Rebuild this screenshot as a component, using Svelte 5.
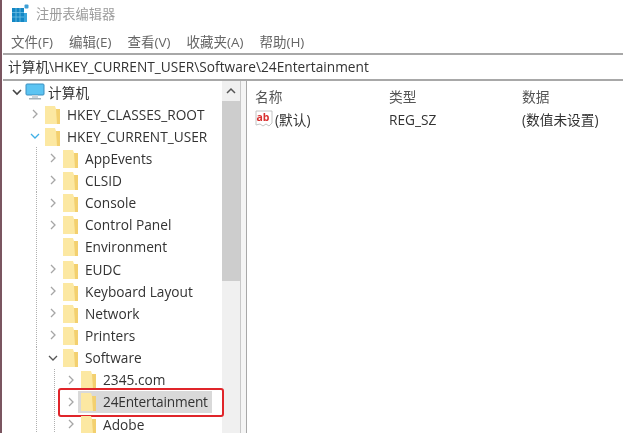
<script>
    const menus = ["文件(F)", "编辑(E)", "查看(V)", "收藏夹(A)", "帮助(H)"];
    const rows = [
        { label: "HKEY_CLASSES_ROOT", depth: 0, arrow: "closed" },
        { label: "HKEY_CURRENT_USER", depth: 0, arrow: "open-blue" },
        { label: "AppEvents", depth: 1, arrow: "closed" },
        { label: "CLSID", depth: 1, arrow: "closed" },
        { label: "Console", depth: 1, arrow: "closed" },
        { label: "Control Panel", depth: 1, arrow: "closed" },
        { label: "Environment", depth: 1, arrow: "none" },
        { label: "EUDC", depth: 1, arrow: "closed" },
        { label: "Keyboard Layout", depth: 1, arrow: "closed" },
        { label: "Network", depth: 1, arrow: "closed" },
        { label: "Printers", depth: 1, arrow: "closed" },
        { label: "Software", depth: 1, arrow: "open" },
        { label: "2345.com", depth: 2, arrow: "closed" },
        { label: "24Entertainment", depth: 2, arrow: "closed", selected: true },
        { label: "Adobe", depth: 2, arrow: "closed" },
    ];
</script>

<div class="window">
    <div class="title">
        <svg class="logo" width="17" height="18" viewBox="0 0 17 18">
            <path d="M0 4h12v14H0z" fill="#1487c4" />
            <path d="M4 4v14M8 4v14M0 8.500h12M0 13h12" stroke="#6fc0e6" stroke-width="0.800" />
            <path d="M12 9h3v9h-3z" fill="#3aa6dc" />
            <rect x="12.500" y="0.500" width="4" height="4" rx="1" fill="#3f9fd6" />
        </svg>
        <span>注册表编辑器</span>
    </div>

    <div class="menu">
        {#each menus as item}
            <span>{item}</span>
        {/each}
    </div>

    <div class="address">计算机\HKEY_CURRENT_USER\Software\24Entertainment</div>

    <div class="main">
        <div class="tree">
            <div class="root">
                <svg class="arrow" width="10" height="10" viewBox="0 0 10 10">
                    <path d="M1 3l4 4 4-4" fill="none" stroke="#444" stroke-width="1.600" />
                </svg>
                <svg width="20" height="18" viewBox="0 0 20 18">
                    <rect x="1" y="1" width="18" height="11" rx="1" fill="#5cc4f2" stroke="#3b8fc0" />
                    <rect x="7" y="12" width="6" height="3" fill="#c9d3da" />
                    <rect x="4" y="15" width="12" height="1.500" fill="#a3b1ba" />
                </svg>
                <span>计算机</span>
            </div>
            {#each rows as row}
                <div class="row depth{row.depth}">
                    <span class="slot">
                        {#if row.arrow === "closed"}
                            <svg width="10" height="12" viewBox="0 0 10 12">
                                <path d="M3 2l4 4-4 4" fill="none" stroke="#a6a6a6" stroke-width="1.300" />
                            </svg>
                        {:else if row.arrow === "open"}
                            <svg width="10" height="12" viewBox="0 0 10 12">
                                <path d="M1 4l4 4 4-4" fill="none" stroke="#555" stroke-width="1.300" />
                            </svg>
                        {:else if row.arrow === "open-blue"}
                            <svg width="10" height="12" viewBox="0 0 10 12">
                                <path d="M1 4l4 4 4-4" fill="none" stroke="#3fb0e6" stroke-width="1.300" />
                            </svg>
                        {/if}
                    </span>
                    <span class="entry" class:selected={row.selected}>
                        <svg class="folder" width="15" height="19" viewBox="0 0 15 19">
                            <path d="M0 1h10l1 3h4v15H0z" fill="#fce8a2" />
                            <path d="M11 4h4v15h-3z" fill="#f3d06f" />
                        </svg>
                        <span class="label">{row.label}</span>
                    </span>
                    {#if row.selected}
                        <span class="mark"></span>
                    {/if}
                </div>
            {/each}
        </div>

        <div class="scrollbar">
            <svg width="10" height="8" viewBox="0 0 10 8">
                <path d="M1 6l4-4 4 4" fill="none" stroke="#555" stroke-width="1.500" />
            </svg>
            <div class="thumb"></div>
        </div>

        <div class="splitter"></div>

        <div class="list">
            <div class="cols head">
                <span>名称</span>
                <span>类型</span>
                <span>数据</span>
            </div>
            <div class="cols">
                <span class="name">
                    <svg width="18" height="18" viewBox="0 0 18 18">
                        <path d="M1 1h16v12l-3 3-3-2-3 2-3-2-4 1z" fill="#fff" stroke="#c4c4c4" />
                        <text x="1.500" y="10.500" class="ab">ab</text>
                    </svg>
                    (默认)
                </span>
                <span>REG_SZ</span>
                <span>(数值未设置)</span>
            </div>
        </div>
    </div>
</div>

<style>
    :global(body) {
        background: #fff;
        overflow: hidden;
    }

    .window {
        width: 623px;
        height: 433px;
        box-sizing: border-box;
        border-left: 2px solid #7a5560;
        padding-left: 1px;
        display: flex;
        flex-direction: column;
        overflow: hidden;
        font-family: "Open Sans", "Noto Sans CJK SC", sans-serif;
        font-size: 13.700px;
        color: #333;
        background: #fff;
        filter: blur(0.4px);
    }

    .title {
        height: 28px;
        box-sizing: border-box;
        padding-bottom: 2px;
        display: flex;
        align-items: center;
        gap: 7px;
        padding-left: 9px;
        color: #9c9c9c;
        font-size: 13.200px;
        flex: none;
    }

    .logo {
        flex: none;
    }

    .menu {
        height: 25px;
        display: flex;
        align-items: center;
        gap: 16px;
        padding-left: 8px;
        color: #666;
        font-size: 13.500px;
        flex: none;
    }

    .address {
        height: 24px;
        line-height: 24px;
        flex: none;
        border-top: 2px solid #a8a8a8;
        border-bottom: 2px solid #a8a8a8;
        padding-left: 5px;
        font-size: 13.700px;
        white-space: nowrap;
    }

    .main {
        flex: 1;
        display: flex;
        min-height: 0;
    }

    .tree {
        width: 219px;
        flex: none;
    }

    .root {
        height: 22px;
        display: flex;
        align-items: center;
        padding-left: 9px;
        gap: 3px;
    }

    .arrow {
        flex: none;
    }

    .row {
        position: relative;
        height: 22.150px;
        display: flex;
        align-items: center;
        background-image:
            linear-gradient(#b0b0b0 50%, transparent 50%),
            linear-gradient(#b0b0b0 50%, transparent 50%);
        background-size: 1px 2px, 1px 2px;
        background-repeat: repeat-y;
        background-position: -9px 0, -9px 0;
    }

    .depth0 {
        padding-left: 27px;
    }

    .depth1 {
        padding-left: 45px;
        background-position: 33px 0, -9px 0;
    }

    .depth2 {
        padding-left: 63px;
        background-position: 33px 0, 51px 0;
    }

    .slot {
        width: 15px;
        flex: none;
        display: flex;
        align-items: center;
    }

    .entry {
        display: flex;
        align-items: center;
        gap: 7px;
        height: 22px;
    }

    .entry.selected {
        background: #d9d9d9;
        padding-right: 4px;
        margin-left: -3px;
        padding-left: 3px;
    }

    .selected .label {
        letter-spacing: -0.2px;
    }

    .folder {
        flex: none;
    }

    .label {
        white-space: nowrap;
    }

    .mark {
        position: absolute;
        left: 55px;
        top: -3px;
        width: 162px;
        height: 25px;
        border: 2.500px solid #e0252a;
        border-radius: 3px;
    }

    .scrollbar {
        width: 18px;
        flex: none;
        background: #f0f0f0;
        display: flex;
        flex-direction: column;
        align-items: center;
        padding-top: 6px;
    }

    .thumb {
        width: 100%;
        height: 180px;
        margin-top: 6px;
        background: #cdcdcd;
    }

    .splitter {
        width: 5px;
        flex: none;
        background: #f5f5f5;
        border-left: 1px solid #c8c8c8;
        border-right: 1px solid #a8a8a8;
    }

    .list {
        flex: 1;
        padding-top: 3px;
    }

    .cols {
        display: grid;
        grid-template-columns: 134px 133px 1fr;
        padding-left: 8px;
        height: 24px;
        align-items: center;
    }

    .head {
        color: #555;
        height: 23px;
    }

    .name {
        display: flex;
        align-items: center;
        gap: 2px;
    }

    .ab {
        font-size: 10.500px;
        font-weight: 700;
        fill: #d9302f;
    }
</style>
